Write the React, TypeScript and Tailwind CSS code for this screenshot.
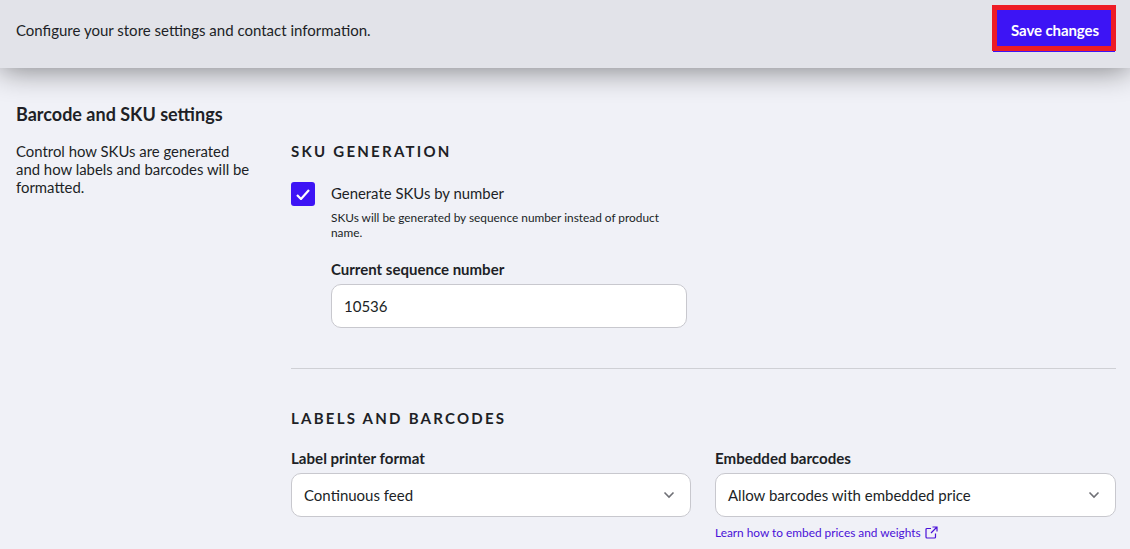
import React from "react";

const Chevron = () => (
  <svg width="12" height="8" viewBox="0 0 12 8" fill="none" stroke="#6f7076" strokeWidth="1.6" className="shrink-0">
    <path d="M1.5 1.5 6 6l4.5-4.5" />
  </svg>
);

const SelectBox = ({ label, value }: { label: string; value: string }) => (
  <div className="flex flex-col">
    <div className="text-[15.1px] leading-[18px] font-bold text-[#201f26] mb-[6px]">{label}</div>
    <div className="h-[44px] bg-white border border-[#c8c8ce] rounded-[10px] pl-3 pr-[15px] flex items-center justify-between text-[15px] text-[#201f26]">
      <span>{value}</span>
      <Chevron />
    </div>
  </div>
);

export default function App() {
  return (
    <div className="h-[549px] w-[1130px] overflow-hidden bg-[#f0f1f7] text-[#201f26] font-['Lato',sans-serif]">
      <header className="relative z-10 h-[68px] bg-[#e2e3e9] flex items-center justify-between pl-4 pr-[14px] pb-[8px] shadow-[0_2px_30px_rgba(0,0,0,0.48)]">
        <p className="text-[15px]">Configure your store settings and contact information.</p>
        <button className="mb-[4px] w-[124px] h-[46px] pt-[4px] pl-[2px] border-[5px] border-[#ee1c25] bg-[#3d14f5] text-white font-bold text-[15px] tracking-[-0.1px] shadow-[0_2px_0_-1px_#3d14f5]">
          Save changes
        </button>
      </header>
      <main className="flex pl-4 pr-[14px]">
        <aside className="w-[275px] shrink-0 pt-[34px]">
          <h2 className="text-lg leading-[24px] font-bold">Barcode and SKU settings</h2>
          <p className="mt-[16px] w-[240px] text-[14.9px] leading-[18px]">
            Control how SKUs are generated and how labels and barcodes will be formatted.
          </p>
        </aside>
        <section className="flex-1 pt-[74px]">
          <h3 className="text-[15px] leading-[18px] font-bold tracking-[2.25px]">SKU GENERATION</h3>
          <div className="mt-[22px] flex gap-4">
            <div className="w-6 h-6 rounded-[3px] bg-[#3d14f5] flex items-center justify-center shrink-0">
              <svg width="14" height="11" viewBox="0 0 14 11" fill="none" stroke="white" strokeWidth="2.2">
                <path d="M1 6l4 4 8-9" />
              </svg>
            </div>
            <div className="w-[356px] pt-[1px]">
              <div className="text-[14.9px] leading-[20px]">Generate SKUs by number</div>
              <p className="mt-[7px] text-[11.85px] leading-[15px]">
                SKUs will be generated by sequence number instead of product name.
              </p>
              <div className="mt-[20px] text-[15px] leading-[18px] font-bold">Current sequence number</div>
              <div className="mt-[6px] h-[44px] bg-white border border-[#c8c8ce] rounded-[10px] pl-3 flex items-center text-[15px]">
                10536
              </div>
            </div>
          </div>
          <hr className="mt-[40px] border-t border-[#cfd0d5]" />
          <h3 className="mt-[40px] text-[15px] leading-[18px] font-bold tracking-[2.25px]">LABELS AND BARCODES</h3>
          <div className="mt-[22px] grid grid-cols-[400px_401px] gap-x-6">
            <SelectBox label="Label printer format" value="Continuous feed" />
            <div>
              <SelectBox label="Embedded barcodes" value="Allow barcodes with embedded price" />
              <a className="mt-[8px] flex items-center gap-[4px] text-[11.85px] leading-[16px] text-[#4a10d8]">
                Learn how to embed prices and weights
                <svg width="13" height="13" viewBox="0 0 13 13" fill="none" stroke="currentColor" strokeWidth="1.2" className="mb-[2px]">
                  <path d="M6 2.5H2a1 1 0 0 0-1 1V11a1 1 0 0 0 1 1h7.5a1 1 0 0 0 1-1V7.5" />
                  <path d="M7.5 1h4.5v4.5M12 1 6 7" />
                </svg>
              </a>
            </div>
          </div>
        </section>
      </main>
    </div>
  );
}
